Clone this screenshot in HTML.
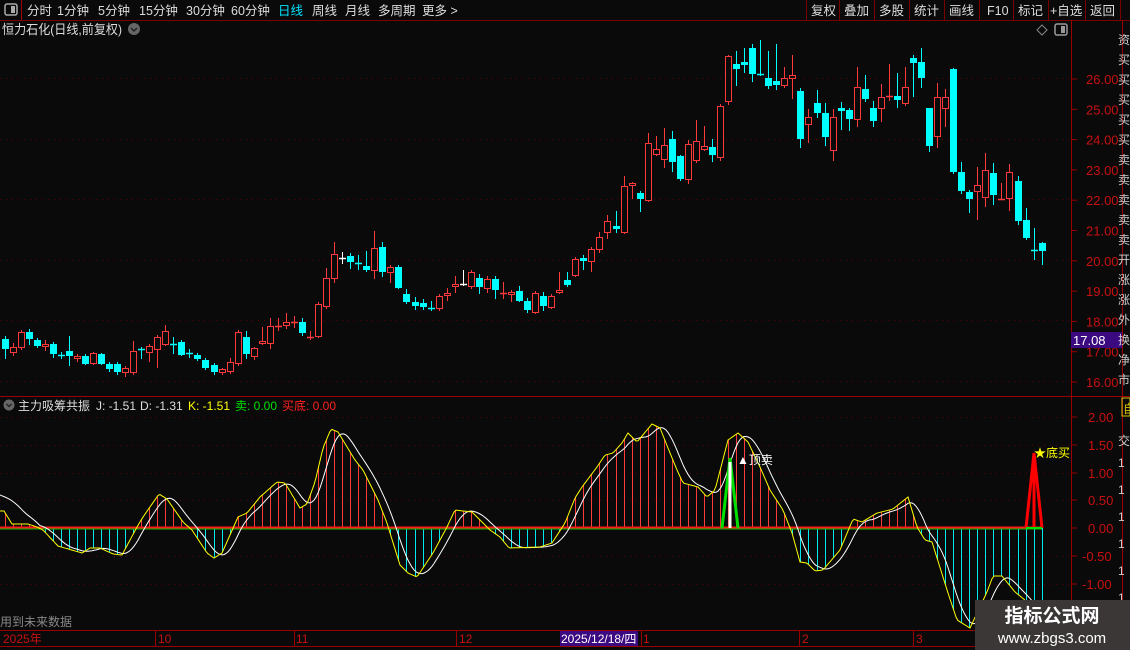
<!DOCTYPE html>
<html><head><meta charset="utf-8"><style>
html,body{margin:0;padding:0;background:#0a0a0a;width:1130px;height:650px;overflow:hidden}
svg{display:block}
text{font-family:"Liberation Sans","Noto Sans CJK SC",sans-serif}
</style></head><body>
<svg id="s" width="1130" height="650" xmlns="http://www.w3.org/2000/svg">
<rect width="1130" height="650" fill="#0a0a0a"/>
<rect x="0" y="0" width="1130" height="20" fill="#0a0a0a"/>
<line x1="0" y1="20.5" x2="1130" y2="20.5" stroke="#7a0000"/>
<line x1="21.5" y1="0" x2="21.5" y2="20" stroke="#a00000"/>
<rect x="5" y="4" width="12" height="11" rx="2" fill="none" stroke="#aaa" stroke-width="1.5"/>
<rect x="11" y="6" width="4" height="7" fill="#aaa"/>
<g font-size="12.5" fill="#ddd">
<text x="27" y="15">分时</text><text x="57" y="15">1分钟</text><text x="98" y="15">5分钟</text>
<text x="139" y="15">15分钟</text><text x="186" y="15">30分钟</text><text x="231" y="15">60分钟</text>
<text x="278" y="15" fill="#00e5ff">日线</text><text x="312" y="15">周线</text><text x="345" y="15">月线</text>
<text x="378" y="15">多周期</text><text x="422" y="15">更多 &gt;</text>
</g>
<g stroke="#7a0000">
<line x1="806.5" y1="0" x2="806.5" y2="20"/><line x1="839.5" y1="0" x2="839.5" y2="20"/>
<line x1="874.5" y1="0" x2="874.5" y2="20"/><line x1="909.5" y1="0" x2="909.5" y2="20"/>
<line x1="944.5" y1="0" x2="944.5" y2="20"/><line x1="979.5" y1="0" x2="979.5" y2="20"/>
<line x1="1013.5" y1="0" x2="1013.5" y2="20"/><line x1="1048.5" y1="0" x2="1048.5" y2="20"/>
<line x1="1085.5" y1="0" x2="1085.5" y2="20"/><line x1="1120.5" y1="0" x2="1120.5" y2="20"/>
</g>
<g font-size="12.5" fill="#ddd">
<text x="811" y="15">复权</text><text x="844" y="15">叠加</text><text x="879" y="15">多股</text>
<text x="914" y="15">统计</text><text x="949" y="15">画线</text><text x="987" y="15">F10</text>
<text x="1018" y="15">标记</text><text x="1050" y="15">+自选</text><text x="1090" y="15">返回</text>
</g>
<text x="2" y="34" font-size="13" fill="#ddd" textLength="120" lengthAdjust="spacingAndGlyphs">恒力石化(日线,前复权)</text>
<circle cx="134" cy="29" r="6" fill="#666"/>
<path d="M131 28 L134 31 L137 28" stroke="#222" stroke-width="1.5" fill="none"/>
<path d="M1042 25 L1047 30 L1042 35 L1037 30Z" fill="none" stroke="#888"/>
<rect x="1055" y="24" width="12" height="11" rx="2" fill="none" stroke="#999" stroke-width="1.5"/>
<rect x="1061" y="26" width="4" height="7" fill="#999"/>
<g stroke="#9a0000">
<line x1="1071.5" y1="20" x2="1071.5" y2="648"/>
<line x1="1122.5" y1="20" x2="1122.5" y2="648"/>
<line x1="0" y1="396.5" x2="1130" y2="396.5"/>
<line x1="0" y1="630.5" x2="1071" y2="630.5"/>
<line x1="0" y1="646.5" x2="1071" y2="646.5"/>
</g>
<g id="grid"></g>
<g id="axis" font-size="13" fill="#c81010"></g>
<rect x="1071" y="332" width="51" height="16" fill="#3c0a80"/>
<text x="1073" y="345" font-size="13" fill="#fff">17.08</text>
<g font-size="12" fill="#ccc">
<text x="1118" y="44">资</text><text x="1118" y="64">买</text><text x="1118" y="84">买</text><text x="1118" y="104">买</text>
<text x="1118" y="124">买</text><text x="1118" y="144">买</text><text x="1118" y="164">卖</text><text x="1118" y="184">卖</text>
<text x="1118" y="204">卖</text><text x="1118" y="224">卖</text><text x="1118" y="244">卖</text><text x="1118" y="264">开</text>
<text x="1118" y="284">涨</text><text x="1118" y="304">涨</text><text x="1118" y="324">外</text><text x="1118" y="344">换</text>
<text x="1118" y="364">净</text><text x="1118" y="384">市</text>
<text x="1118" y="445">交</text><text x="1118" y="467">1</text><text x="1118" y="494">1</text><text x="1118" y="521">1</text>
<text x="1118" y="548">1</text><text x="1118" y="575">1</text><text x="1118" y="602">1</text>
</g>
<rect x="1122" y="398" width="8" height="18" fill="none" stroke="#d4c000"/>
<text x="1123" y="413" font-size="12" fill="#d4c000">自</text>
<g id="candles"></g>
<circle cx="9" cy="405" r="5.5" fill="#666"/>
<path d="M6.5 404 L9 406.5 L11.5 404" stroke="#222" stroke-width="1.5" fill="none"/>
<g font-size="12">
<text x="18" y="410" fill="#ddd">主力吸筹共振</text>
<text x="96" y="410" fill="#ddd">J: -1.51</text>
<text x="140" y="410" fill="#ddd">D: -1.31</text>
<text x="188" y="410" fill="#ffff00">K: -1.51</text>
<text x="235" y="410" fill="#00e000">卖: 0.00</text>
<text x="282" y="410" fill="#ff2020">买底: 0.00</text>
</g>
<g id="osc"></g>
<text x="737" y="464" font-size="12" fill="#fff">▲顶卖</text>
<text x="1034" y="457" font-size="12" fill="#ffff00">★底买</text>
<text x="0" y="626" font-size="12" fill="#888">用到未来数据</text>
<g stroke="#9a0000">
<line x1="155.5" y1="631" x2="155.5" y2="646"/><line x1="294.5" y1="631" x2="294.5" y2="646"/>
<line x1="456.5" y1="631" x2="456.5" y2="646"/><line x1="641.5" y1="631" x2="641.5" y2="646"/>
<line x1="799.5" y1="631" x2="799.5" y2="646"/><line x1="913.5" y1="631" x2="913.5" y2="646"/>
</g>
<g font-size="12" fill="#c81010">
<text x="3" y="643">2025年</text><text x="158" y="643">10</text><text x="296" y="643">11</text>
<text x="459" y="643">12</text><text x="643" y="643">1</text><text x="802" y="643">2</text><text x="916" y="643">3</text>
</g>
<rect x="560" y="631" width="78" height="15" fill="#3c0a80"/>
<text x="561" y="643" font-size="12" fill="#fff">2025/12/18/四</text>
<rect x="975" y="600" width="155" height="50" fill="#3b3737"/>
<text x="1052" y="622" font-size="19" font-weight="bold" fill="#fff" text-anchor="middle">指标公式网</text>
<text x="1052" y="643" font-size="15" fill="#fff" text-anchor="middle">www.zbgs3.com</text>
</svg>
<script>
var NS="http://www.w3.org/2000/svg";
function el(p,t,a){var e=document.createElementNS(NS,t);for(var k in a)e.setAttribute(k,a[k]);p.appendChild(e);return e;}
var g=document.getElementById('grid'),ax=document.getElementById('axis');
[78,139,199,260,320,381].forEach(function(y){el(g,'line',{x1:0,y1:y+.5,x2:1071,y2:y+.5,stroke:'#5a0000','stroke-dasharray':'1 5'});});
[417,445,473,500,556,584].forEach(function(y){el(g,'line',{x1:0,y1:y+.5,x2:1071,y2:y+.5,stroke:'#5a0000','stroke-dasharray':'1 5'});});
for(var p=16;p<=26;p++){var y=382-(p-16)*30.3;el(g,'line',{x1:1071,y1:y,x2:1077,y2:y,stroke:'#9a0000'});var t=el(ax,'text',{x:1086,y:y+5});t.textContent=p.toFixed(2);}
var lv=[[2,417],[1.5,445],[1,473],[.5,500],[0,528],[-.5,556],[-1,584]];
lv.forEach(function(v){el(g,'line',{x1:1071,y1:v[1],x2:1077,y2:v[1],stroke:'#9a0000'});var t=el(ax,'text',{x:v[0]<0?1082:1088,y:v[1]+5});t.textContent=v[0].toFixed(2);});
var D="c 339 349 336 359|r 347 353 343 356|r 332 348 330 350|c 332 339 329 345|c 340 346 338 348|r 344 347 340 351|c 344 354 342 358|X 355 355 352 359|c 351 356 336 366|r 356 359 354 362|c 356 364 354 365|r 353 364 352 365|c 354 364 353 365|c 364 369 362 372|c 364 372 362 375|r 368 373 366 377|r 351 373 341 375|X 349 349 347 359|r 346 353 344 362|r 337 350 335 368|r 331 345 325 346|X 344 344 337 354|c 342 355 340 356|X 353 353 349 358|c 355 359 353 361|c 360 368 358 370|c 365 372 363 375|r 369 373 368 375|r 362 372 358 374|r 332 364 330 366|c 337 354 331 359|r 348 357 347 360|r 341 344 327 345|r 326 344 318 349|R 326 326 318 331|r 322 326 313 329|R 322 322 316 328|c 322 333 318 336|R 337 337 331 340|r 304 337 302 338|r 278 307 268 309|r 254 279 242 283|W 258 258 252 264|c 256 262 253 269|X 263 263 255 270|c 266 270 251 272|r 248 271 231 279|c 247 272 242 277|r 267 273 265 283|c 267 288 265 289|c 294 302 289 304|c 302 306 297 310|c 303 307 299 310|X 308 308 301 311|r 296 309 294 311|r 293 296 288 301|r 284 287 276 293|W 284 284 270 286|r 272 287 270 289|c 278 287 274 294|r 279 289 276 293|c 279 290 276 299|R 293 293 282 299|r 292 295 290 302|c 291 301 286 302|c 301 310 298 313|r 293 313 291 314|c 296 306 292 311|r 296 308 294 309|r 290 293 272 294|c 280 285 272 287|r 259 276 257 277|c 258 261 255 270|r 249 262 247 272|r 237 250 232 253|r 221 233 215 239|c 226 229 211 233|r 186 233 176 234|r 183 186 182 199|c 193 199 191 212|r 143 201 133 202|r 149 155 136 156|r 145 160 128 168|c 139 162 131 172|c 156 179 155 181|r 144 180 140 184|r 141 161 120 163|r 146 150 126 151|c 147 155 139 162|r 106 158 104 161|r 56 102 55 105|c 64 69 51 86|c 62 65 48 73|c 48 74 44 82|X 74 74 40 76|c 78 86 51 89|c 81 85 44 90|r 78 86 67 88|r 75 79 55 99|c 91 139 88 148|r 117 125 109 143|c 103 113 90 118|c 113 137 103 146|r 117 151 109 161|c 108 111 102 130|c 110 119 108 131|r 87 120 67 127|c 89 99 75 102|c 108 121 101 127|r 97 109 84 122|R 96 96 64 101|c 96 100 73 108|r 87 104 67 106|c 58 63 55 97|c 62 78 48 88|c 108 146 108 152|r 97 137 83 148|r 97 109 89 127|c 69 172 68 174|c 172 191 162 194|c 192 199 190 213|r 185 192 167 220|r 170 198 153 207|c 173 195 163 205|R 199 199 183 200|r 172 199 164 211|c 181 221 176 225|c 220 238 208 240|X 250 250 228 260|c 243 251 242 265".split('|');
var cg=document.getElementById('candles');
D.forEach(function(s,i){var a=s.split(' '),t=a[0],o=+a[1],c=+a[2],h=+a[3],l=+a[4];var x=Math.round(4.5+8.04*i)+.5;
 var col=(t=='c'||t=='X')?'#00ffff':(t=='W'?'#ffffff':'#ff3a3a');
 el(cg,'line',{x1:x,y1:h,x2:x,y2:l,stroke:col});
 if(t=='c'){el(cg,'rect',{x:x-3.5,y:o,width:7,height:Math.max(c-o,1.5),fill:col});}
 else if(t=='r'){el(cg,'rect',{x:x-3,y:o+.5,width:6,height:Math.max(c-o-1,1),fill:'#0a0a0a',stroke:col});}
 else {el(cg,'line',{x1:x-3.5,y1:o+.5,x2:x+3.5,y2:o+.5,stroke:col,'stroke-width':1.5});}
});
var Y=[[0,511],[4,511],[12,524],[28,524],[37,527],[43,530],[58,546],[82,553],[90,548],[100,548],[113,554],[122,555],[137,527],[143,517],[159,494],[167,499],[183,522],[192,530],[207,553],[214,558],[222,553],[238,517],[247,513],[260,497],[277,482],[285,483],[300,508],[307,504],[315,482],[323,448],[331,429],[338,432],[355,460],[363,470],[378,500],[387,523],[390,533],[400,565],[408,573],[417,577],[425,565],[433,553],[447,527],[455,510],[463,511],[472,512],[480,520],[490,530],[500,537],[509,548],[540,547],[552,543],[565,523],[575,498],[582,487],[597,467],[605,455],[613,453],[622,443],[628,433],[637,442],[652,424],[660,428],[668,448],[677,470],[683,483],[698,487],[707,497],[715,490],[728,440],[738,433],[748,442],[760,467],[770,490],[783,510],[792,533],[800,562],[807,563],[815,571],[823,570],[840,550],[853,519],[862,522],[877,513],[893,509],[908,497],[917,527],[925,540],[932,542],[948,593],[957,620],[970,628],[987,592],[993,576],[1002,576],[1015,592],[1025,600],[1042,628]];
function yv(x){for(var i=1;i<Y.length;i++){if(x<=Y[i][0]){var a=Y[i-1],b=Y[i];return a[1]+(b[1]-a[1])*(x-a[0])/(b[0]-a[0]);}}return Y[Y.length-1][1];}
var og=document.getElementById('osc');
for(var i=0;i<130;i++){var x=Math.round(4.5+8.04*i)+.5,y=yv(x);if(Math.abs(y-528)<2)continue;
 el(og,'line',{x1:x,y1:528,x2:x,y2:Math.min(y,630),stroke:y<528?'#ff3a3a':'#00e8f0'});}
var yp='',wp='';
for(var x=0;x<=1042;x+=2){yp+=(x?'L':'M')+x+' '+Math.min(yv(x),632).toFixed(1);}
for(var x=0;x<=1042;x+=2){var s=0,n=0;for(var k=x-16;k<=x;k+=2){s+=yv(Math.max(k,0));n++;}var v=s/n;if(x<40)v=495+(v-495)*(x/40);wp+=(x?'L':'M')+x+' '+Math.min(v,632).toFixed(1);}
el(og,'line',{x1:0,y1:529,x2:1042,y2:529,stroke:'#00c000','stroke-width':1});
el(og,'line',{x1:0,y1:527.5,x2:1042,y2:527.5,stroke:'#ff1a1a','stroke-width':2});
el(og,'path',{d:wp,stroke:'#ffffff',fill:'none','stroke-width':1});
el(og,'path',{d:yp,stroke:'#ffff00',fill:'none','stroke-width':1});
el(og,'path',{d:'M722 528 L730 458 L738 528',stroke:'#00e000','stroke-width':3,fill:'none'});
el(og,'line',{x1:730,y1:462,x2:730,y2:528,stroke:'#fff','stroke-width':3});
el(og,'path',{d:'M1026 528 L1034 453 L1042 528',stroke:'#ff0000','stroke-width':3,fill:'none'});
el(og,'line',{x1:1034,y1:458,x2:1034,y2:528,stroke:'#ff0000','stroke-width':3});
el(og,'line',{x1:1026,y1:528,x2:1042,y2:528,stroke:'#00e000','stroke-width':2});
</script>
</body></html>
